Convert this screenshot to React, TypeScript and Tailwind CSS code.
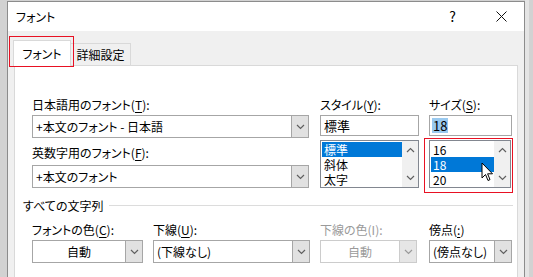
import React from "react";

const FONT = "font-['Yu_Gothic_UI','Noto_Sans_CJK_JP',sans-serif] [font-feature-settings:'palt']";

function Chevron({ down = true, color = "#606060" }: { down?: boolean; color?: string }) {
  return (
    <svg width="9" height="6" viewBox="0 0 9 6">
      <polyline
        points={down ? "1,1 4.5,4.5 8,1" : "1,5 4.5,1.5 8,5"}
        fill="none"
        stroke={color}
        strokeWidth="1.2"
      />
    </svg>
  );
}

// ── Combo box (editable text + drop button) ───────────────────
function Combo({ value, w, center, disabled }: { value: string; w: string; center?: boolean; disabled?: boolean }) {
  return (
    <div className={`${w} h-[23px] flex border ${disabled ? "border-[#cccccc]" : "border-[#a6a6a6]"} bg-white`}>
      <div className={`flex-1 flex items-center px-[3px] text-[12px] ${center ? "justify-center" : ""} ${disabled ? "text-[#9a9a9a]" : "text-black"}`}>
        {value}
      </div>
      <div className={`w-[17px] flex items-center justify-center border-l ${disabled ? "border-[#cccccc] bg-[#e6e6e6]" : "border-[#a6a6a6] bg-[#e1e1e1]"}`}>
        <Chevron color={disabled ? "#9a9a9a" : "#606060"} />
      </div>
    </div>
  );
}

function ListBox({ items, sel, w }: { items: string[]; sel: number; w: string }) {
  return (
    <div className={`${w} h-[48px] flex border border-[#828790] bg-white`}>
      <div className="flex-1 flex flex-col pt-[1px] pl-[1px]">
        {items.map((it, i) => (
          <div
            key={it}
            className={`h-[15px] flex items-center px-[2px] text-[12px] ${i === sel ? "bg-[#0078d7] text-white" : "text-black"}`}
          >
            <span className="leading-[15px]">{it}</span>
          </div>
        ))}
      </div>
      <div className="w-[16px] bg-[#f0f0f0] flex flex-col justify-between items-center py-[6px]">
        <Chevron down={false} />
        <Chevron />
      </div>
    </div>
  );
}

function Label({ children, gray }: { children: React.ReactNode; gray?: boolean }) {
  return <div className={`h-[15px] leading-[15px] text-[12px] ${gray ? "text-[#9a9a9a]" : "text-black"}`}>{children}</div>;
}

function U({ c }: { c: string }) {
  return <span className="underline underline-offset-2">{c}</span>;
}

export default function App() {
  return (
    <div className={`w-[533px] h-[277px] bg-[#d2d2d2] overflow-hidden relative flex ${FONT}`}>
      <div className="w-[7px] shrink-0" />
      {/* Window */}
      <div className="mt-[1px] w-[518px] h-[290px] border-l border-t border-r border-[#8c8c8c] bg-[#f0f0f0] flex flex-col">
        {/* Title bar */}
        <div className="h-[29px] bg-white flex items-center pl-[8px] text-[12px] text-black shrink-0">
          <span>フォント</span>
          <div className="flex-1" />
          <span className="text-[14px] mr-[40px]">?</span>
          <svg width="11" height="11" viewBox="0 0 11 11" className="mr-[17px]">
            <path d="M0.5 0.5 L10.5 10.5 M10.5 0.5 L0.5 10.5" stroke="#111" strokeWidth="1" />
          </svg>
        </div>

        {/* Tabs */}
        <div className="h-[34px] flex items-end pl-[5px] shrink-0 relative z-10">
          <div className="w-[58px] h-[26px] bg-white border border-b-0 border-[#d9d9d9] flex items-center justify-center text-[12px] mb-[-1px]">
            フォント
          </div>
          <div className="w-[60px] h-[22px] bg-[#f0f0f0] border border-b-0 border-l-0 border-[#d9d9d9] flex items-center justify-center text-[12px]">
            詳細設定
          </div>
        </div>

        {/* Panel */}
        <div className="ml-[6px] w-[504px] flex-1 bg-white border border-[#d9d9d9] pt-[31px] pl-[17px]">
          <div className="flex">
            <div className="w-[277px] flex flex-col">
              <Label>日本語用のフォント(<U c="T" />):</Label>
              <div className="h-[3px]" />
              <Combo w="w-[277px]" value="+本文のフォント - 日本語" />
              <div className="h-[7px]" />
              <Label>英数字用のフォント(<U c="F" />):</Label>
              <div className="h-[5px]" />
              <Combo w="w-[277px]" value="+本文のフォント" />
            </div>
            <div className="w-[11px]" />
            <div className="w-[99px] flex flex-col">
              <Label>スタイル(<U c="Y" />):</Label>
              <div className="h-[3px]" />
              <div className="h-[21px] border border-[#a6a6a6] flex items-center px-[3px] text-[13px]">標準</div>
              <div className="h-[4px]" />
              <ListBox w="w-[99px]" items={["標準", "斜体", "太字"]} sel={0} />
            </div>
            <div className="w-[10px]" />
            <div className="w-[83px] flex flex-col">
              <Label>サイズ(<U c="S" />):</Label>
              <div className="h-[3px]" />
              <div className="h-[21px] border border-[#a6a6a6] flex items-center px-[2px] text-[13px]">
                <span className="bg-[#99c9ef] px-[1px] leading-[15px]">18</span>
              </div>
              <div className="h-[4px]" />
              <ListBox w="w-[82px]" items={["16", "18", "20"]} sel={1} />
            </div>
          </div>

          {/* Separator */}
          <div className="flex items-center ml-[-9px] mt-[10px] w-[490px]">
            <span className="text-[12px] leading-[15px]">すべての文字列</span>
            <div className="flex-1 h-px bg-[#dcdcdc] ml-[6px]" />
          </div>

          <div className="flex mt-[9px]">
            <div className="flex flex-col">
              <Label>フォントの色(<U c="C" />):</Label>
              <div className="h-[3px]" />
              <Combo w="w-[111px]" value="自動" center />
            </div>
            <div className="w-[10px]" />
            <div className="flex flex-col">
              <Label>下線(<U c="U" />):</Label>
              <div className="h-[3px]" />
              <Combo w="w-[157px]" value="(下線なし)" />
            </div>
            <div className="w-[10px]" />
            <div className="flex flex-col">
              <Label gray>下線の色(I):</Label>
              <div className="h-[3px]" />
              <Combo w="w-[97px]" value="自動" center disabled />
            </div>
            <div className="w-[12px]" />
            <div className="flex flex-col">
              <Label>傍点(<U c=":" />)</Label>
              <div className="h-[3px]" />
              <Combo w="w-[83px]" value="(傍点なし)" />
            </div>
          </div>
        </div>
      </div>
      <div className="w-[4px] bg-[#e4e4e4] shrink-0" />

      {/* Annotations */}
      <div className="absolute left-[9px] top-[36px] w-[65px] h-[31px] border border-[#e81123] z-20" />
      <div className="absolute left-[424px] top-[138px] w-[89px] h-[55px] border border-[#e81123]" />

      {/* Mouse cursor */}
      <svg className="absolute left-[481px] top-[162px]" width="13" height="21" viewBox="0 0 13 21">
        <path
          d="M1 1 L1 16 L4.5 12.5 L7 18.5 L9 17.6 L6.6 11.8 L11.5 11.8 Z"
          fill="#fff"
          stroke="#000"
          strokeWidth="1"
          strokeLinejoin="miter"
        />
      </svg>
    </div>
  );
}
